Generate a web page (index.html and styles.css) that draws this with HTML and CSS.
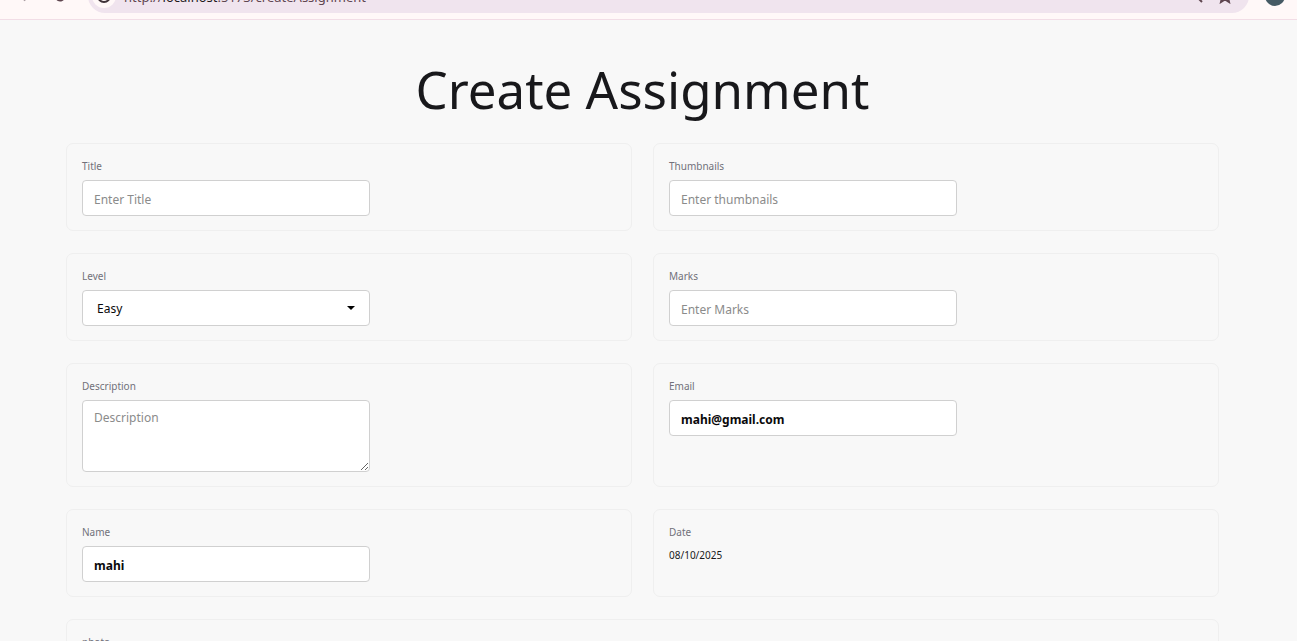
FILE: index.html
```html
<!DOCTYPE html>
<html lang="en">
<head>
<meta charset="utf-8">
<meta name="viewport" content="width=device-width, initial-scale=1">
<title>Create Assignment</title>
<link rel="stylesheet" href="styles.css">
</head>
<body>
<header class="toolbar">
  <div class="nav-icons">
    <svg width="16" height="16" viewBox="0 0 20 20" fill="none" stroke="#a99da3" stroke-width="2" aria-hidden="true"><path d="M3 10h13M10 4l6 6-6 6"/></svg>
    <svg width="16" height="16" viewBox="0 0 20 20" fill="none" stroke="#5f4650" stroke-width="2" aria-hidden="true"><path d="M15.500 7A6 6 0 1 0 16 11M16 3v5h-5"/></svg>
  </div>
  <div class="address">
    <span class="site-info">
      <svg width="16" height="16" viewBox="0 0 16 16" fill="none" stroke="#3f3338" stroke-width="2" aria-hidden="true"><circle cx="8" cy="8" r="6"/><path d="M8 7v4M8 4v1"/></svg>
    </span>
    <span class="url">http://<span class="host">localhost</span>:5173/createAssignment</span>
    <span class="address-icons">
      <svg width="16" height="16" viewBox="0 0 16 16" fill="none" stroke="#5f4650" stroke-width="2" aria-hidden="true"><circle cx="5" cy="6" r="4"/><path d="M8 9l5 5"/></svg>
      <svg width="16" height="16" viewBox="0 0 16 16" fill="none" stroke="#5f4650" stroke-width="2" aria-hidden="true"><path d="M8 2l2 4 4 .5-3 3 1 4.500-4-2.500-4 2.500 1-4.500-3-3L6 6z"/></svg>
    </span>
  </div>
  <span class="avatar"></span>
</header>
<main class="page">
  <h1 class="heading">Create Assignment</h1>
  <form class="form-grid">
    <div class="card">
      <label class="label" for="title">Title</label>
      <input class="control" id="title" type="text" placeholder="Enter Title">
    </div>
    <div class="card">
      <label class="label" for="thumbnails">Thumbnails</label>
      <input class="control" id="thumbnails" type="text" placeholder="Enter thumbnails">
    </div>
    <div class="card">
      <label class="label" for="level">Level</label>
      <span class="select-wrap">
        <select class="control select" id="level"><option>Easy</option><option>Medium</option><option>Hard</option></select>
        <svg class="caret" width="8" height="4" viewBox="0 0 8 4" aria-hidden="true"><path d="M0 0h8L4 4z"/></svg>
      </span>
    </div>
    <div class="card">
      <label class="label" for="marks">Marks</label>
      <input class="control" id="marks" type="text" placeholder="Enter Marks">
    </div>
    <div class="card">
      <label class="label" for="description">Description</label>
      <textarea class="control textarea" id="description" placeholder="Description"></textarea>
    </div>
    <div class="card">
      <label class="label" for="email">Email</label>
      <input class="control filled" id="email" type="email" value="mahi@gmail.com">
    </div>
    <div class="card">
      <label class="label" for="name">Name</label>
      <input class="control filled" id="name" type="text" value="mahi">
    </div>
    <div class="card">
      <span class="label">Date</span>
      <time class="date" datetime="2025-08-10">08/10/2025</time>
    </div>
    <div class="card wide">
      <label class="label" for="photo">photo</label>
      <input class="control" id="photo" type="text">
    </div>
  </form>
</main>
</body>
</html>
```
FILE: styles.css
```css
* { box-sizing: border-box; }

body {
  margin: 0;
  height: 100vh;
  display: flex;
  flex-direction: column;
  overflow: hidden;
  background: #f8f8f8;
  color: #18181b;
  font-family: "Segoe UI", "Noto Sans", "Open Sans", sans-serif;
  font-size: 10px;
}

.toolbar {
  flex: none;
  display: flex;
  align-items: flex-end;
  height: 20px;
  padding: 0 12px 6px 16px;
  overflow: hidden;
  background: #fff8f8;
  border-bottom: 1px solid #f2dde6;
}

.nav-icons {
  display: flex;
  align-items: center;
  gap: 20px;
  width: 72px;
  height: 34px;
}

.address {
  flex: 1;
  display: flex;
  align-items: center;
  height: 34px;
  padding: 0 16px 0 4px;
  border-radius: 17px;
  background: #f0e4ee;
}

.site-info {
  display: flex;
  align-items: center;
  justify-content: center;
  width: 24px;
  height: 24px;
  border-radius: 50%;
  background: #fff8f8;
}

.url {
  flex: 1;
  padding: 2px 0 0 8px;
  color: #5f4650;
  font-size: 13px;
  line-height: 20px;
}

.host { color: #1f1a1c; }

.address-icons {
  display: flex;
  gap: 12px;
}

.address-icons svg, .nav-icons svg { display: block; }

.avatar {
  width: 20px;
  height: 20px;
  margin: 0 0 7px 16px;
  border-radius: 50%;
  background: #455a64;
}

.page {
  flex: 1;
  min-height: 0;
  overflow: hidden;
  padding: 38px 78px 0 66px;
}

.heading {
  margin: 0 0 22px;
  font-size: 51px;
  font-weight: 400;
  line-height: 63px;
  text-align: center;
}

.form-grid {
  display: grid;
  grid-template-columns: 1fr 1fr;
  gap: 22px 21px;
}

.card {
  display: flex;
  flex-direction: column;
  align-items: flex-start;
  padding: 15px 15px 14px;
  border: 1px solid #efefef;
  border-radius: 7px;
}

.wide { grid-column: 1 / -1; }

.label {
  margin-bottom: 6px;
  color: #71717a;
  font-size: 10px;
  line-height: 15px;
}

.control {
  display: block;
  width: 288px;
  max-width: 100%;
  height: 36px;
  margin: 0;
  padding: 2px 11px 0;
  border: 1px solid #d0d0d0;
  border-radius: 4px;
  background: #fff;
  color: #09090b;
  font-family: inherit;
  font-size: 12px;
  line-height: 18px;
}

.control::placeholder { color: #8b8b8b; opacity: 1; }

.filled { font-weight: 700; }

.select-wrap {
  position: relative;
  display: block;
  width: 288px;
  max-width: 100%;
}

.select {
  appearance: none;
  padding: 2px 14px 0;
}

.caret {
  position: absolute;
  right: 15px;
  top: 16px;
  pointer-events: none;
}

.textarea {
  height: 72px;
  padding: 8px 11px;
  resize: both;
}

.date {
  font-size: 10px;
  line-height: 18px;
}
```
